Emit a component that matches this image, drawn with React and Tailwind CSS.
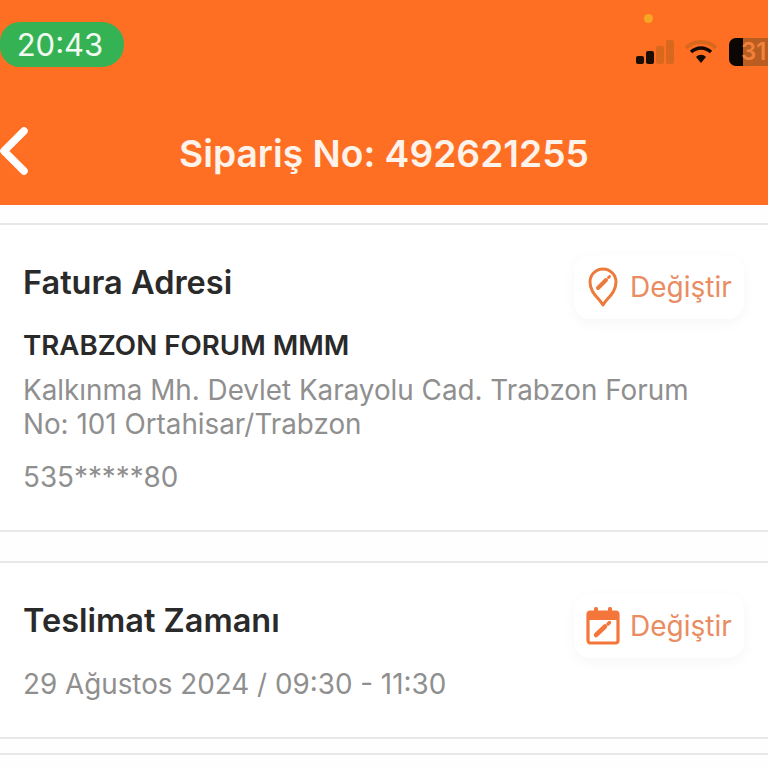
function ChangeButton({ icon }) {
  return (
    <div className="flex h-[64px] w-[170px] items-center rounded-2xl bg-white pl-[12px] shadow-[0_4px_14px_rgba(0,0,0,0.04)]">
      <div className="flex w-[34px] shrink-0 justify-center">{icon}</div>
      <span className="ml-[10px] text-[28px] leading-none text-[#e98c62]">Değiştir</span>
    </div>
  );
}

function BackChevron() {
  return (
    <svg width="32" height="50" viewBox="0 0 32 50" fill="none" className="absolute left-0 top-[6px]">
      <path d="M24 5 L4 25 L24 45" stroke="#fff" strokeWidth="7.5" strokeLinecap="round" strokeLinejoin="round" />
    </svg>
  );
}

function PinIcon() {
  return (
    <svg width="30" height="40" viewBox="0 0 30 40" fill="none" className="shrink-0">
      <path d="M15 38 C11 31 2 26 2 15 A13 13 0 0 1 28 15 C28 26 19 31 15 38 Z" stroke="#ec7a3c" strokeWidth="3" strokeLinejoin="round" />
      <path d="M10 21 L18 13" stroke="#ec7a3c" strokeWidth="4" strokeLinecap="round" />
      <path d="M20.5 10.5 L21.5 9.5" stroke="#ec7a3c" strokeWidth="3" strokeLinecap="round" />
    </svg>
  );
}

function CalendarIcon() {
  return (
    <svg width="34" height="38" viewBox="0 0 34 38" fill="none" className="shrink-0">
      <rect x="2" y="5" width="30" height="31" rx="2.5" stroke="#f4763a" strokeWidth="3.2" />
      <rect x="2" y="5" width="30" height="8" fill="#f4763a" />
      <rect x="8" y="0" width="4" height="8" rx="1.5" fill="#f4763a" />
      <rect x="22" y="0" width="4" height="8" rx="1.5" fill="#f4763a" />
      <path d="M10 28 L19 19.5" stroke="#f4763a" strokeWidth="4.5" strokeLinecap="round" />
      <path d="M22 17 L23.5 15.5" stroke="#f4763a" strokeWidth="3.5" strokeLinecap="round" />
    </svg>
  );
}

function StatusIcons() {
  return (
    <div className="flex items-center">
      <div className="flex items-end gap-[2px]">
        <div className="h-[8px] w-[8px] rounded-[2px] bg-[#1a0d06]" />
        <div className="h-[13px] w-[8px] rounded-[2px] bg-[#1a0d06]" />
        <div className="h-[18px] w-[8px] rounded-[2px] bg-[#d9681f]" />
        <div className="h-[24px] w-[8px] rounded-[2px] bg-[#d9681f]" />
      </div>
      <svg width="32" height="24" viewBox="0 0 32 24" className="ml-[11px]">
        <path d="M1 8 C9 0 23 0 31 8" stroke="#d9681f" strokeWidth="4" fill="none" />
        <path d="M6 12 C12 6.5 20 6.5 26 12" stroke="#140a05" strokeWidth="3.5" fill="none" />
        <path d="M11 17 C14 14 18 14 21 17 L16 23 Z" fill="#140a05" />
      </svg>
      <div className="ml-[12px] flex h-[28px] w-[39px] items-center overflow-hidden rounded-l-[7px] bg-[#b95d20]">
        <div className="flex h-full w-[14px] bg-[#0d0703]" />
        <span className="-ml-[2px] text-[24px] font-semibold leading-none text-[#f2813c]">31</span>
      </div>
    </div>
  );
}

export default function App() {
  return (
    <div className="h-[768px] w-[768px] overflow-hidden bg-[#fefefe] font-['Inter',sans-serif]">
      <header className="flex h-[205px] flex-col bg-[#ff6f23]">
        <div className="flex items-start justify-between pt-[22px]">
          <div className="flex h-[45px] w-[124px] items-center justify-center rounded-r-[22px] rounded-l-[20px] bg-[#35b254] pr-[4px] text-[31px] leading-none text-[#f1fbf1]">
            20:43
          </div>
          <div className="flex flex-col items-end">
            <div className="mr-[115px] mt-[-8px] h-[9px] w-[9px] rounded-full bg-[#f5a623]" />
            <div className="mt-[15px]">
              <StatusIcons />
            </div>
          </div>
        </div>
        <div className="relative mt-[53px] flex h-[60px] items-center justify-center">
          <BackChevron />
          <h1 className="pt-[7px] text-[37.2px] font-semibold leading-none text-[#fdf3ea]">Sipariş No: 492621255</h1>
        </div>
      </header>

      <section className="mt-[18px] h-[309px] border-y-2 border-[#e8e8e8] bg-white px-[23px]">
        <div className="flex items-start justify-between pr-[1px] pt-[30px]">
          <h2 className="pt-[12px] text-[32.5px] font-semibold leading-none text-[#2a2a2a]">Fatura Adresi</h2>
          <ChangeButton icon={<PinIcon />} />
        </div>
        <p className="mt-[13px] text-[27.7px] font-semibold leading-none text-[#2a2a2a]">TRABZON FORUM MMM</p>
        <p className="mt-[13px] text-[27.8px] leading-[34px] text-[#8f8f8f]">
          Kalkınma Mh. Devlet Karayolu Cad. Trabzon Forum
          <br />
          No: 101 Ortahisar/Trabzon
        </p>
        <p className="mt-[23px] text-[27.8px] leading-none text-[#8f8f8f]">535*****80</p>
      </section>

      <section className="mt-[29px] h-[178px] border-y-2 border-[#e8e8e8] bg-white px-[23px]">
        <div className="flex items-start justify-between pr-[1px] pt-[31px]">
          <h2 className="pt-[11px] text-[32.5px] font-semibold leading-none text-[#2a2a2a]">Teslimat Zamanı</h2>
          <ChangeButton icon={<CalendarIcon />} />
        </div>
        <p className="mt-[13px] text-[27.8px] leading-none text-[#8f8f8f]">29 Ağustos 2024 / 09:30 - 11:30</p>
      </section>

      <div className="mt-[14px] border-t-2 border-[#e8e8e8]" />
    </div>
  );
}
